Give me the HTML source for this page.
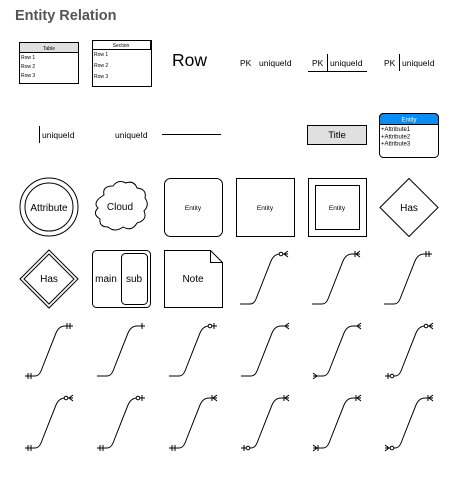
<!DOCTYPE html>
<html><head><meta charset="utf-8"><style>
html,body{margin:0;padding:0;background:#fff;width:474px;height:480px;overflow:hidden}
svg{display:block}
text{font-family:"Liberation Sans",Arial,sans-serif;fill:#000}
</style></head><body>
<svg width="474" height="480" viewBox="0 0 474 480" xmlns="http://www.w3.org/2000/svg">
<defs>
<path id="cv" d="M0,50 h10 q4,0 6,-5 l15,-38 q3,-7 9,-7 h8" fill="none" stroke="#000" stroke-width="1"/>
<g id="Rbars" stroke="#000" stroke-width="1"><line x1="42" y1="-3" x2="42" y2="3"/><line x1="45" y1="-3" x2="45" y2="3"/></g>
<g id="Rbar" stroke="#000" stroke-width="1"><line x1="45" y1="-3" x2="45" y2="3"/></g>
<g id="Robar" stroke="#000" stroke-width="1" fill="#fff"><circle cx="41" cy="0" r="1.8"/><line x1="45" y1="-3" x2="45" y2="3"/></g>
<g id="Rcrow" stroke="#000" stroke-width="1" fill="none"><path d="M48,-3 L44,0 L48,3"/></g>
<g id="Rocrow" stroke="#000" stroke-width="1" fill="#fff"><circle cx="41" cy="0" r="1.8"/><path d="M48,-3 L44,0 L48,3" fill="none"/></g>
<g id="Rbarcrow" stroke="#000" stroke-width="1" fill="none"><line x1="43" y1="-3" x2="43" y2="3"/><path d="M48,-3 L44,0 L48,3"/></g>
<g id="Lbars" stroke="#000" stroke-width="1"><line x1="3" y1="47" x2="3" y2="53"/><line x1="6" y1="47" x2="6" y2="53"/></g>
<g id="Lcrow" stroke="#000" stroke-width="1" fill="none"><path d="M0,47 L4,50 L0,53"/></g>
<g id="Lbarcirc" stroke="#000" stroke-width="1" fill="#fff"><line x1="3" y1="47" x2="3" y2="53"/><circle cx="7" cy="50" r="1.8"/></g>
<g id="Lcrowbar" stroke="#000" stroke-width="1" fill="none"><path d="M0,47 L4,50 L0,53"/><line x1="5" y1="47" x2="5" y2="53"/></g>
<g id="Lcrowcirc" stroke="#000" stroke-width="1" fill="#fff"><path d="M0,47 L4,50 L0,53" fill="none"/><circle cx="7" cy="50" r="1.8"/></g>
</defs>

<text x="15" y="20" font-size="14.5" font-weight="bold" style="fill:#555">Entity Relation</text>

<rect x="19.5" y="42.5" width="59" height="41" fill="#fff" stroke="#000"/>
<rect x="19.5" y="42.5" width="59" height="10" fill="#e0e0e0" stroke="#000"/>
<text x="49" y="50" font-size="5" text-anchor="middle">Table</text>
<text x="21" y="59" font-size="5">Row 1</text>
<text x="21" y="68" font-size="5">Row 2</text>
<text x="21" y="77" font-size="5">Row 3</text>
<rect x="92.5" y="40.5" width="59" height="46" fill="#fff" stroke="#000"/>
<line x1="92.5" y1="49.5" x2="151.5" y2="49.5" stroke="#000"/>
<line x1="151" y1="40" x2="151" y2="50" stroke="#000" stroke-width="2"/>
<text x="121" y="47" font-size="5" text-anchor="middle">Section</text>
<text x="94" y="56" font-size="5">Row 1</text>
<text x="94" y="67" font-size="5">Row 2</text>
<text x="94" y="78" font-size="5">Row 3</text>
<text x="172" y="66" font-size="17.5">Row</text>
<text x="240" y="66" font-size="8.5">PK</text><text x="259" y="66" font-size="8.5">uniqueId</text>
<text x="312" y="66" font-size="8.5">PK</text><text x="330" y="66" font-size="8.5">uniqueId</text>
<line x1="327.5" y1="54" x2="327.5" y2="71" stroke="#000"/>
<line x1="308" y1="71.5" x2="367" y2="71.5" stroke="#000"/>
<text x="384" y="66" font-size="8.5">PK</text><text x="402" y="66" font-size="8.5">uniqueId</text>
<line x1="399.5" y1="54" x2="399.5" y2="71" stroke="#000"/>
<line x1="39.5" y1="126" x2="39.5" y2="143" stroke="#000"/>
<text x="42" y="138" font-size="8.5">uniqueId</text>
<text x="115" y="138" font-size="8.5">uniqueId</text>
<line x1="162" y1="134.5" x2="221" y2="134.5" stroke="#000"/>
<rect x="307.5" y="125.5" width="59" height="19" fill="#e0e0e0" stroke="#000"/>
<text x="337" y="138" font-size="9.5" text-anchor="middle">Title</text>
<rect x="379.5" y="113.5" width="59" height="44" rx="4" fill="#fff" stroke="#000"/>
<path d="M379.5,124.5 V117.5 a4,4 0 0 1 4,-4 H434.5 a4,4 0 0 1 4,4 V124.5 Z" fill="#0a8cf5" stroke="#000"/>
<text x="409" y="121.5" font-size="6" text-anchor="middle" style="fill:#fff">Entity</text>
<text x="381" y="131" font-size="6">+Attribute1</text>
<text x="381" y="138.5" font-size="6">+Attribute2</text>
<text x="381" y="145.5" font-size="6">+Attribute3</text>

<circle cx="49" cy="207" r="29" fill="#fff" stroke="#000"/>
<circle cx="49" cy="207" r="24" fill="#fff" stroke="#000"/>
<text x="49" y="211" font-size="10" text-anchor="middle">Attribute</text>
<path d="M104,195 q-2,-9 9,-9 q5,-7 13,-3 q8,-3 11,5 q10,1 8,10 q5,7 -1,13 q4,9 -7,12 q-5,9 -14,4 q-8,6 -15,0 q-9,0 -8,-8 q-8,-5 -2,-11 q-6,-6 6,-13z" fill="#fff" stroke="#000"/>
<text x="120" y="210" font-size="10" text-anchor="middle">Cloud</text>
<rect x="164.5" y="178.5" width="58" height="58" rx="6" fill="#fff" stroke="#000"/>
<text x="193" y="210" font-size="6.5" text-anchor="middle">Entity</text>
<rect x="236.5" y="178.5" width="58" height="58" fill="#fff" stroke="#000"/>
<text x="265" y="210" font-size="6.5" text-anchor="middle">Entity</text>
<rect x="308.5" y="178.5" width="58" height="58" fill="#fff" stroke="#000"/>
<rect x="315.5" y="185.5" width="44" height="44" fill="#fff" stroke="#000"/>
<text x="337" y="210" font-size="6.5" text-anchor="middle">Entity</text>
<path d="M409,178.5 L438,207.5 L409,236.5 L380,207.5Z" fill="#fff" stroke="#000"/>
<text x="409" y="211" font-size="10" text-anchor="middle">Has</text>

<path d="M49,250 L78,279 L49,308 L20,279Z" fill="#fff" stroke="#000"/>
<path d="M49,254 L74,279 L49,304 L24,279Z" fill="#fff" stroke="#000"/>
<text x="49" y="282" font-size="10" text-anchor="middle">Has</text>
<rect x="92.5" y="250.5" width="58" height="57" rx="4" fill="#fff" stroke="#000"/>
<rect x="121.5" y="253.5" width="26" height="51" rx="4" fill="#fff" stroke="#000"/>
<text x="106" y="282" font-size="10" text-anchor="middle">main</text>
<text x="134" y="282" font-size="10" text-anchor="middle">sub</text>
<path d="M164.5,250.5 H210.5 L222.5,262.5 V307.5 H164.5Z" fill="#fff" stroke="#000"/>
<path d="M210.5,250.5 V262.5 H222.5" fill="none" stroke="#000"/>
<text x="193" y="282" font-size="10" text-anchor="middle">Note</text>

<g transform="translate(240,254)"><use href="#cv"/><use href="#Rocrow"/></g>
<g transform="translate(312,254)"><use href="#cv"/><use href="#Rbarcrow"/></g>
<g transform="translate(384,254)"><use href="#cv"/><use href="#Rbars"/></g>
<g transform="translate(25,326)"><use href="#cv"/><use href="#Rbars"/><use href="#Lbars"/></g>
<g transform="translate(97,326)"><use href="#cv"/><use href="#Rbar"/></g>
<g transform="translate(169,326)"><use href="#cv"/><use href="#Robar"/></g>
<g transform="translate(241,326)"><use href="#cv"/><use href="#Rcrow"/></g>
<g transform="translate(313,326)"><use href="#cv"/><use href="#Rcrow"/><use href="#Lcrow"/></g>
<g transform="translate(385,326)"><use href="#cv"/><use href="#Rocrow"/><use href="#Lbarcirc"/></g>
<g transform="translate(25,398)"><use href="#cv"/><use href="#Rocrow"/><use href="#Lbars"/></g>
<g transform="translate(97,398)"><use href="#cv"/><use href="#Robar"/><use href="#Lbars"/></g>
<g transform="translate(169,398)"><use href="#cv"/><use href="#Rbarcrow"/><use href="#Lbars"/></g>
<g transform="translate(241,398)"><use href="#cv"/><use href="#Rbarcrow"/><use href="#Lbarcirc"/></g>
<g transform="translate(313,398)"><use href="#cv"/><use href="#Rbarcrow"/><use href="#Lcrowbar"/></g>
<g transform="translate(385,398)"><use href="#cv"/><use href="#Rbarcrow"/><use href="#Lcrowcirc"/></g>
</svg>
</body></html>
